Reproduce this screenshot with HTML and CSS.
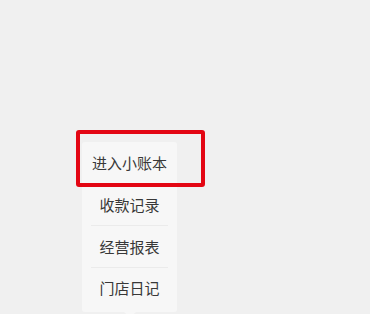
FILE: index.html
```html
<!DOCTYPE html>
<html lang="zh">
<head>
<meta charset="utf-8">
<link rel="stylesheet" href="styles.css">
</head>
<body>
<div class="page">
  <div class="menu">
    <div class="item">进入小账本</div>
    <div class="item">收款记录</div>
    <div class="item">经营报表</div>
    <div class="item item-last">门店日记</div>
    <div class="arrow"></div>
    <div class="highlight"></div>
  </div>
</div>
</body>
</html>
```
FILE: styles.css
```css
html, body {
  margin: 0;
  padding: 0;
  background: #f0f0f0;
}
.page {
  width: 370px;
  height: 314px;
  overflow: hidden;
  padding: 142px 0 0 82px;
  box-sizing: border-box;
  font-family: "Noto Sans CJK SC", "Noto Sans", sans-serif;
}
.menu {
  position: relative;
  width: 95px;
  background: #f7f7f7;
  border-radius: 3px;
  padding: 0 0 3px;
}
.item {
  height: 41px;
  line-height: 41px;
  text-align: center;
  font-size: 15px;
  color: #383838;
  margin: 0 9px;
  border-bottom: 1px solid #ebebeb;
}
.item-last {
  border-bottom: none;
  line-height: 39px;
}
.arrow {
  position: absolute;
  left: 42px;
  bottom: -5px;
  width: 0;
  height: 0;
  border-left: 6px solid transparent;
  border-right: 6px solid transparent;
  border-top: 5px solid #f7f7f7;
}
.highlight {
  position: absolute;
  left: -6px;
  top: -12px;
  width: 129px;
  height: 57px;
  box-sizing: border-box;
  border: 4px solid #e30613;
  border-radius: 3px;
}
```
